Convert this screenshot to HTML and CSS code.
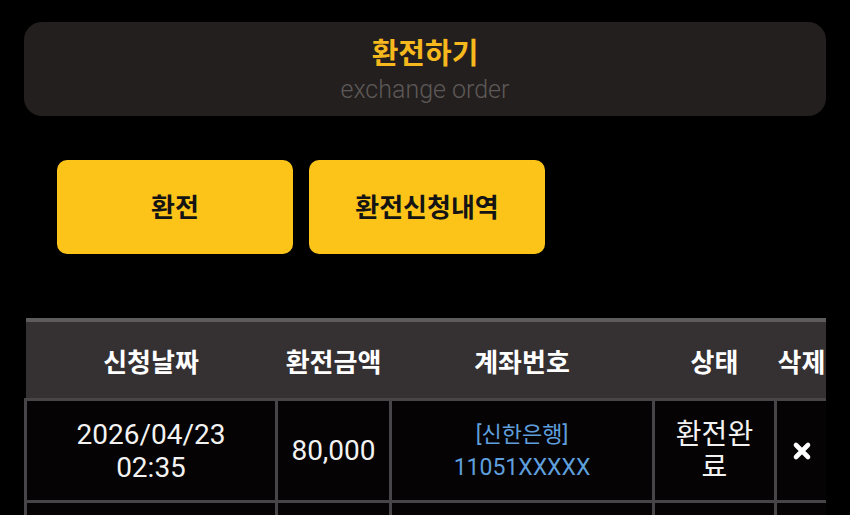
FILE: index.html
```html
<!DOCTYPE html>
<html lang="ko">
<head>
    <meta charset="UTF-8">
    <meta name="viewport" content="width=device-width, initial-scale=1.0">
    <title>환전하기</title>
    <link rel="stylesheet" href="styles.css">
</head>
<body>
    <div class="page-title">
        <h1>환전하기</h1>
        <p>exchange order</p>
    </div>

    <div class="tabs">
        <a class="tab-btn" href="#">환전</a>
        <a class="tab-btn" href="#">환전신청내역</a>
    </div>

    <div class="list-wrap">
        <table class="history">
            <thead>
                <tr>
                    <th class="col-date">신청날짜</th>
                    <th class="col-amount">환전금액</th>
                    <th class="col-account">계좌번호</th>
                    <th class="col-status">상태</th>
                    <th class="col-del">삭제</th>
                </tr>
            </thead>
            <tbody>
                <tr>
                    <td>2026/04/23<br>02:35</td>
                    <td>80,000</td>
                    <td class="account"><span class="bank">[신한은행]</span><br>11051XXXXX</td>
                    <td class="status">환전완료</td>
                    <td>
                        <svg class="del-icon" viewBox="0 0 20 20" width="20" height="20">
                            <path d="M4 4 L16 16 M16 4 L4 16" stroke="#fff" stroke-width="4.6" stroke-linecap="round"/>
                        </svg>
                    </td>
                </tr>
                <tr>
                    <td>2026/04/22<br>18:10</td>
                    <td>50,000</td>
                    <td class="account"><span class="bank">[신한은행]</span><br>11051XXXXX</td>
                    <td class="status">환전완료</td>
                    <td>
                        <svg class="del-icon" viewBox="0 0 20 20" width="20" height="20">
                            <path d="M4 4 L16 16 M16 4 L4 16" stroke="#fff" stroke-width="4.6" stroke-linecap="round"/>
                        </svg>
                    </td>
                </tr>
            </tbody>
        </table>
    </div>
</body>
</html>
```

FILE: styles.css
```css
body {
    margin: 0;
    background-color: #000;
    font-family: Roboto, "Noto Sans CJK KR", sans-serif;
    color: #f2f2f2;
}
.page-title {
    margin: 22px 24px 0;
    height: 94px;
    box-sizing: border-box;
    padding-top: 14px;
    background-color: #231f1e;
    border-radius: 18px;
    text-align: center;
}
.page-title h1 {
    margin: 0;
    font-size: 29px;
    line-height: 36px;
    font-weight: bold;
    color: #f5b81d;
}
.page-title p {
    margin: 3px 0 0;
    font-size: 25px;
    line-height: 30px;
    font-weight: 300;
    color: #5d5958;
}
.tabs {
    display: flex;
    gap: 16px;
    margin-top: 44px;
    padding-left: 57px;
}
.tab-btn {
    display: flex;
    align-items: center;
    justify-content: center;
    width: 236px;
    height: 94px;
    box-sizing: border-box;
    padding-bottom: 4px;
    background-color: #fcc419;
    border-radius: 10px;
    color: #141414;
    font-size: 26px;
    font-weight: bold;
    text-decoration: none;
}
.list-wrap {
    margin: 64px 24px 0;
    overflow: hidden;
}
.history {
    width: 802px;
    border-collapse: collapse;
    table-layout: fixed;
    text-align: center;
}
.history th {
    height: 76px;
    padding: 0;
    background-color: #353133;
    border-top: 4px solid #5d5b5c;
    font-size: 26px;
    font-weight: bold;
    color: #fff;
    white-space: nowrap;
}
.history td {
    height: 99px;
    padding: 0 10px;
    border: 3px solid #474548;
    background-color: #050304;
    font-size: 28px;
    line-height: 33px;
}
.col-date { width: 251px; }
.col-amount { width: 114px; }
.col-account { width: 263px; }
.col-status { width: 122px; }
.col-del { width: 52px; }
.history td.account {
    color: #5e9fdc;
    font-size: 23px;
}
.bank {
    font-size: 22px;
}
.history td.status {
    padding: 0 12px;
    word-break: break-all;
}
.history td:last-child {
    padding: 0;
}
.del-icon {
    display: block;
    margin: 0 auto;
}
```
